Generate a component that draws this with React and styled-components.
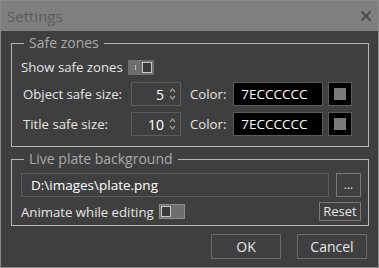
import React from "react";
import styled, { createGlobalStyle } from "styled-components";

const Global = createGlobalStyle`
	html, body {
		margin: 0;
		padding: 0;
		background: #3f3f3f;
	}
	body {
		font-family: "Open Sans", "Noto Sans", sans-serif;
	}
`;

const Window = styled.div`
	width: 379px;
	height: 268px;
	box-sizing: border-box;
	border: 1px solid #8a8a8a;
	background: #3f3f3f;
	display: flex;
	flex-direction: column;
`;

const TitleBar = styled.div`
	height: 30px;
	background: #7f7f7f;
	display: flex;
	align-items: center;
	justify-content: space-between;
	padding: 0 6px 0 6px;
	color: #5c5c5c;
	font-size: 15px;
	flex-shrink: 0;
`;

const Close = styled.svg`
	width: 12px;
	height: 12px;
`;

const Body = styled.div`
	padding: 4px 9px 0 10px;
	display: flex;
	flex-direction: column;
`;

const Group = styled.fieldset`
	margin: 0;
	padding: ${(p) => p.$pt}px 7px ${(p) => p.$pb}px 9px;
	border: 1px solid #b5b5b5;
	border-radius: 0;
	display: flex;
	flex-direction: column;
	gap: ${(p) => p.$gap}px;
	& + & {
		margin-top: 4px;
	}
`;

const Legend = styled.legend`
	padding: 0 5px;
	margin-left: 3px;
	color: #ababab;
	font-size: 14px;
	line-height: 16px;
`;

const Row = styled.div`
	display: flex;
	align-items: center;
	height: ${(p) => p.$h || 24}px;
`;

const Label = styled.span`
	color: #e6e6e6;
	font-size: 13.2px;
	width: ${(p) => (p.$w ? p.$w + "px" : "auto")};
	padding-left: ${(p) => p.$indent || 0}px;
	white-space: nowrap;
`;

const Toggle = styled.div`
	width: 26px;
	height: 15px;
	box-sizing: border-box;
	margin-left: 5px;
	background: #6e6e6e;
	border: 1px solid ${(p) => (p.$on ? "#6e6e6e" : "#8e8e8e")};
	display: flex;
	align-items: stretch;
	justify-content: ${(p) => (p.$on ? "flex-end" : "flex-start")};
	position: relative;
	padding: 1px;
`;

const Knob = styled.div`
	width: 10px;
	background: #3a3a3a;
	border: 1px solid #c8c8c8;
	box-sizing: border-box;
`;

const Tick = styled.div`
	position: absolute;
	left: 6px;
	top: 4px;
	width: 1px;
	height: 5px;
	background: #bcbcbc;
`;

const Spin = styled.div`
	width: 50px;
	height: 24px;
	box-sizing: border-box;
	border: 1px solid #5c5c5c;
	display: flex;
	align-items: center;
	justify-content: flex-end;
	color: #ffffff;
	font-size: 14px;
	padding-right: 4px;
	gap: 5px;
`;

const Arrows = styled.svg`
	width: 7px;
	height: 14px;
`;

const ColorLabel = styled(Label)`
	margin-left: 9px;
	margin-right: 7px;
`;

const TextBox = styled.div`
	width: ${(p) => p.$w}px;
	height: 24px;
	box-sizing: border-box;
	background: ${(p) => (p.$dark ? "#000" : "transparent")};
	border: 1px solid #5c5c5c;
	color: #ffffff;
	font-size: 13.5px;
	display: flex;
	align-items: center;
	padding-left: ${(p) => p.$pad || 7}px;
`;

const Swatch = styled.div`
	width: 24px;
	height: 24px;
	box-sizing: border-box;
	margin-left: 5px;
	background: #000;
	border: 1px solid #5c5c5c;
	display: flex;
	align-items: center;
	justify-content: center;
	&::after {
		content: "";
		width: 12px;
		height: 12px;
		background: #7a7a7a;
	}
`;

const Button = styled.button`
	box-sizing: border-box;
	width: ${(p) => p.$w}px;
	height: ${(p) => p.$h || 24}px;
	margin: 0;
	margin-left: ${(p) => p.$ml || 0}px;
	padding: 0;
	background: transparent;
	border: 1px solid ${(p) => p.$border || "#6a6a6a"};
	color: #e6e6e6;
	font-family: inherit;
	font-size: ${(p) => p.$fs || 14}px;
	line-height: 1;
`;

const Spacer = styled.div`
	flex: 1;
`;

const Footer = styled.div`
	display: flex;
	justify-content: flex-end;
	padding: 8px 2px 0 0;
	gap: 16px;
`;

const SpinArrows = () => (
	<Arrows viewBox="0 0 7 14">
		<path d="M1 5 L3.5 2 L6 5" fill="none" stroke="#9a9a9a" strokeWidth="1.3" />
		<path d="M1 9 L3.5 12 L6 9" fill="none" stroke="#9a9a9a" strokeWidth="1.3" />
	</Arrows>
);

const SizeRow = ({ label, value }) => (
	<Row>
		<Label $w={108} $indent={2}>
			{label}
		</Label>
		<Spin>
			{value}
			<SpinArrows />
		</Spin>
		<ColorLabel>Color:</ColorLabel>
		<TextBox $w={90} $dark>
			7ECCCCCC
		</TextBox>
		<Swatch />
	</Row>
);

export default function App() {
	return (
		<>
			<Global />
			<Window>
				<TitleBar>
					<span>Settings</span>
					<Close viewBox="0 0 12 12">
						<path d="M1.5 1.5 L10.5 10.5 M10.5 1.5 L1.5 10.5" stroke="#4a4a4a" strokeWidth="2" />
					</Close>
				</TitleBar>
				<Body>
					<Group $pt={7} $pb={10} $gap={6}>
						<Legend>Safe zones</Legend>
						<Row $h={18}>
							<Label>Show safe zones</Label>
							<Toggle $on>
								<Tick />
								<Knob />
							</Toggle>
						</Row>
						<SizeRow label="Object safe size:" value="5" />
						<SizeRow label="Title safe size:" value="10" />
					</Group>
					<Group $pt={6} $pb={4} $gap={5}>
						<Legend>Live plate background</Legend>
						<Row>
							<TextBox $w={308} $pad={9}>
								D:\images\plate.png
							</TextBox>
							<Button $w={25} $ml={7} $border="#7a7a7a" $fs={12}>
								...
							</Button>
						</Row>
						<Row $h={19}>
							<Label>Animate while editing</Label>
							<Toggle>
								<Knob />
							</Toggle>
							<Spacer />
							<Button $w={42} $h={19} $fs={13} $border="#7a7a7a">
								Reset
							</Button>
						</Row>
					</Group>
					<Footer>
						<Button $w={70} $h={25}>
							OK
						</Button>
						<Button $w={70} $h={25}>
							Cancel
						</Button>
					</Footer>
				</Body>
			</Window>
		</>
	);
}
